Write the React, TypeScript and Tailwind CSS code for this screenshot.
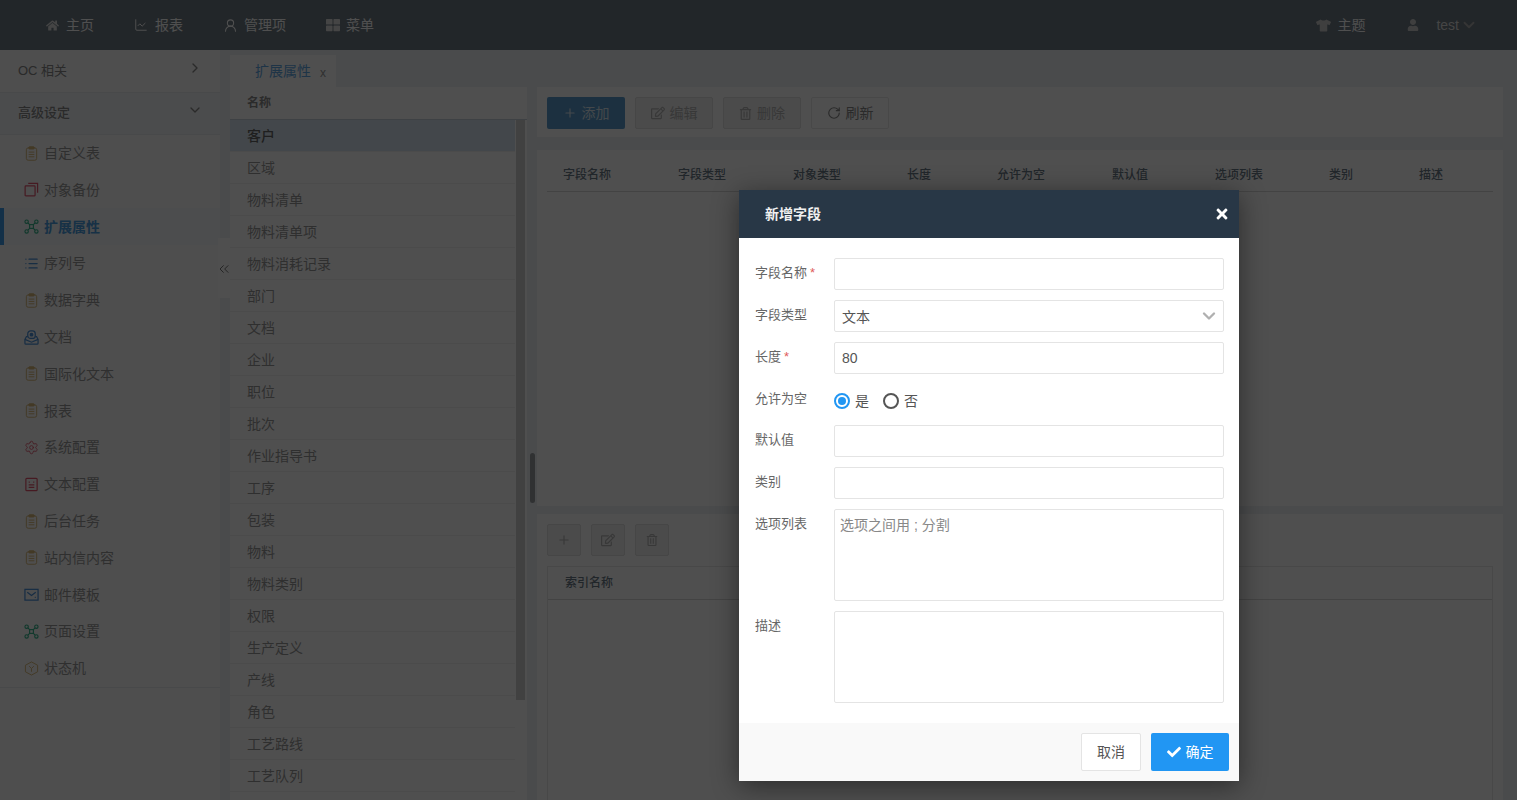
import { ChevronDown, ChevronRight, ChevronsLeft, List, Plus, RotateCw, Settings, UserRound, ChartLine } from "lucide-react";
import { FaCheck, FaHome, FaRegEdit, FaRegTrashAlt, FaThLarge, FaTimes, FaTshirt, FaUser } from "react-icons/fa";

type IconProps = { className?: string; strokeWidth?: number };

const NodesIcon = ({ className }: IconProps) => (
  <svg viewBox="0 0 16 16" fill="none" stroke="currentColor" strokeWidth="1.2" className={className}>
    <circle cx="2.8" cy="2.8" r="1.8" />
    <circle cx="13.2" cy="2.8" r="1.8" />
    <circle cx="2.8" cy="13.2" r="1.8" />
    <circle cx="13.2" cy="13.2" r="1.8" />
    <path d="M4.2 4.2 6 6M11.8 4.2 10 6M4.2 11.8 6 10M11.8 11.8 10 10" />
    <rect x="6" y="6" width="4" height="4" />
  </svg>
);

const ClipIcon = ({ className }: IconProps) => (
  <svg viewBox="0 0 16 16" fill="none" stroke="currentColor" strokeWidth="1" className={className}>
    <rect x="2.5" y="2" width="11" height="13.2" rx="2" />
    <rect x="5" y="0.8" width="6" height="2.4" rx="1" fill="currentColor" />
    <path d="M5 6.5h6M5 9h6M5 11.5h6" />
  </svg>
);

const BackupIcon = ({ className }: IconProps) => (
  <svg viewBox="0 0 16 16" fill="none" stroke="currentColor" strokeWidth="1.3" className={className}>
    <rect x="1.2" y="4.2" width="10.6" height="10.6" rx="0.8" />
    <path d="M4.5 1.5h10v10" />
  </svg>
);

const TrayIcon = ({ className }: IconProps) => (
  <svg viewBox="0 0 16 16" fill="none" stroke="currentColor" strokeWidth="1.3" className={className}>
    <path d="M4 7H2.6L1 10v4a1 1 0 0 0 1 1h12a1 1 0 0 0 1-1v-4l-1.6-3H12" />
    <path d="M1 10l7 3 7-3" />
    <rect x="4" y="1" width="8" height="8" rx="3" />
    <circle cx="8" cy="5" r="1.4" fill="currentColor" />
  </svg>
);

const NoteIcon = ({ className }: IconProps) => (
  <svg viewBox="0 0 16 16" fill="none" stroke="currentColor" strokeWidth="1.3" className={className}>
    <rect x="2" y="1.5" width="12" height="13" rx="1" />
    <path d="M5 5.5h1.2M9.8 5.5H11M5 8.5h6M5 11h6" />
  </svg>
);

const MailIcon = ({ className }: IconProps) => (
  <svg viewBox="0 0 16 16" fill="none" stroke="currentColor" strokeWidth="1.3" className={className}>
    <rect x="1" y="2.5" width="14" height="11.5" />
    <path d="m3.5 5.5 4.5 3.5 4.5-3.5M11.5 11h1" />
  </svg>
);

const HexIcon = ({ className }: IconProps) => (
  <svg viewBox="0 0 16 16" fill="none" stroke="currentColor" strokeWidth="1" className={className}>
    <path d="M8 1 14.5 4.5v7L8 15l-6.5-3.5v-7z" />
    <path d="M5.5 5.5 8 8l2.5-2.5M8 8v3.5" />
  </svg>
);

const amber = "text-[#d8b878]";

const menu = [
  { name: "自定义表", Icon: ClipIcon, color: amber },
  { name: "对象备份", Icon: BackupIcon, color: "text-[#e0566f]" },
  { name: "扩展属性", Icon: NodesIcon, color: "text-[#2fb389]", active: true },
  { name: "序列号", Icon: List, color: "text-[#4a90d9]", stroke: 2 },
  { name: "数据字典", Icon: ClipIcon, color: amber },
  { name: "文档", Icon: TrayIcon, color: "text-[#4a90d9]" },
  { name: "国际化文本", Icon: ClipIcon, color: amber },
  { name: "报表", Icon: ClipIcon, color: amber },
  { name: "系统配置", Icon: Settings, color: "text-[#e0566f]" },
  { name: "文本配置", Icon: NoteIcon, color: "text-[#e0566f]" },
  { name: "后台任务", Icon: ClipIcon, color: amber },
  { name: "站内信内容", Icon: ClipIcon, color: amber },
  { name: "邮件模板", Icon: MailIcon, color: "text-[#4a90d9]" },
  { name: "页面设置", Icon: NodesIcon, color: "text-[#2fb389]" },
  { name: "状态机", Icon: HexIcon, color: amber },
];

const entities = ["客户", "区域", "物料清单", "物料清单项", "物料消耗记录", "部门", "文档", "企业", "职位", "批次", "作业指导书", "工序", "包装", "物料", "物料类别", "权限", "生产定义", "产线", "角色", "工艺路线", "工艺队列"];

const columns = [
  { name: "字段名称", width: "w-[115px]" },
  { name: "字段类型", width: "w-[115px]" },
  { name: "对象类型", width: "w-[114px]" },
  { name: "长度", width: "w-[90px]" },
  { name: "允许为空", width: "w-[115px]" },
  { name: "默认值", width: "w-[103px]" },
  { name: "选项列表", width: "w-[114px]" },
  { name: "类别", width: "w-[90px]" },
  { name: "描述", width: "w-[60px]" },
];

const Label = ({ text, required }: { text: string; required?: boolean }) => (
  <label className="w-[79px] shrink-0 pt-[6px] text-[13px] leading-[18px] text-[#666]">
    {text}
    {required && <span className="ml-[3px] text-[#e05c5c]">*</span>}
  </label>
);

const inputClass = "h-8 w-[390px] rounded-[2px] border border-[#e4e4e4] bg-white px-[7px] text-sm text-[#555] outline-none";
const areaClass = "h-[92px] w-[390px] resize-none rounded-[2px] border border-[#e4e4e4] px-[5px] py-[6px] text-sm leading-[18px] text-[#555] outline-none placeholder:text-[#888]";

const GreyButton = ({ icon, text }: { icon: React.ReactNode; text: string }) => (
  <button className="flex h-8 w-[78px] items-center justify-center gap-[5px] rounded-[2px] border border-[#e0e0e0] bg-[#f0f0f0] text-sm text-[#b5b5b5]">
    {icon}
    {text}
  </button>
);

const SquareButton = ({ children }: { children: React.ReactNode }) => (
  <button className="flex h-8 w-[34px] items-center justify-center rounded-[2px] border border-[#e0e0e0] bg-[#f0f0f0] text-[#b5b5b5]">
    {children}
  </button>
);

export default function App() {
  return (
    <div className="relative flex h-screen flex-col overflow-hidden bg-[#edf2f6] font-['Liberation_Sans','Noto_Sans_CJK_SC',sans-serif]">
      {/* top nav */}
      <header className="flex h-[50px] shrink-0 items-center justify-between bg-[#6e7a84] text-sm text-white">
        <div className="flex items-center">
          <a className="ml-[46px] flex items-center gap-[7px]"><FaHome className="size-[13px] text-[#ddd]" />主页</a>
          <a className="ml-10 flex items-center gap-[7px]"><ChartLine className="size-[14px]" strokeWidth={1.7} />报表</a>
          <a className="ml-10 flex items-center gap-[6px]"><UserRound className="size-[15px]" strokeWidth={1.7} />管理项</a>
          <a className="ml-10 flex items-center gap-[6px]"><FaThLarge className="size-[14px] text-[#ddd]" />菜单</a>
        </div>
        <div className="flex items-center pr-[39px]">
          <a className="flex items-center gap-[6px]"><FaTshirt className="size-[15px] text-[#ccc]" />主题</a>
          <a className="ml-[42px] flex items-center"><FaUser className="size-3 text-[#ccc]" /><span className="ml-[17px] text-[#ddd]">test</span><ChevronDown className="ml-[1px] size-[18px] text-[#aaa]" strokeWidth={2.5} /></a>
        </div>
      </header>

      <div className="flex min-h-0 flex-1">
        {/* sidebar */}
        <aside className="relative w-[230px] shrink-0">
          <div className="h-full w-[220px] bg-[#fbfbfb]">
            <div className="border-b border-[#e8ebee]">
              <div className="flex h-[42.7px] items-center justify-between border-b border-[#e8ebee] pl-[18px] pr-[17px] text-[13px] text-[#888]">
                <span>OC 相关</span>
                <ChevronRight className="mb-[6px] size-4" />
              </div>
              <div className="flex h-[42px] items-center justify-between border-b border-[#e8ebee] bg-[#f2f5f8] pl-[18px] pr-[17px] text-[13px] font-medium text-[#888]">
                <span>高级设定</span>
                <ChevronDown className="mb-[6px] size-4" />
              </div>
              {menu.map((item) => (
                <div
                  key={item.name}
                  className={`flex h-[36.8px] items-center border-l-4 pl-5 text-sm ${item.active ? "border-[#3d9be9] bg-[#f4f7fa] font-bold text-[#4a9de0]" : "border-transparent text-[#999]"}`}
                >
                  <item.Icon className={`size-[15px] ${item.color}`} strokeWidth={item.stroke ?? 1.4} />
                  <span className="ml-[5px]">{item.name}</span>
                </div>
              ))}
            </div>
          </div>
          <div className="absolute left-[218px] top-[188px] flex h-[60px] w-3 items-end justify-center bg-white pb-[21px] text-[#777]">
            <ChevronsLeft className="size-4 shrink-0" strokeWidth={1.5} />
          </div>
        </aside>

        {/* entity list */}
        <div className="flex w-[297px] shrink-0 flex-col overflow-hidden">
          <div className="mt-[5px] flex h-8 w-[106px] shrink-0 items-center bg-white pl-[25px] text-sm text-[#62a8e5]">
            扩展属性<span className="ml-[9px] mt-[3px] text-xs text-[#999]">x</span>
          </div>
          <div className="relative flex-1 bg-white">
            <div className="flex h-[33px] items-center border-b border-[#c9d3dc] pl-[17px] text-xs font-bold text-[#8a8a8a]">名称</div>
            {entities.map((name, i) => (
              <div key={name} className={`flex h-8 w-[285px] items-center border-b border-[#f0f0f0] pl-[17px] text-sm ${i === 0 ? "bg-[#d8e6f2] font-medium text-[#666]" : "text-[#999]"}`}>
                {name}
              </div>
            ))}
            <div className="absolute right-[2px] top-[33px] h-[580px] w-[9px] bg-[#d2d2d2]" />
          </div>
        </div>

        {/* splitter */}
        <div className="relative w-[10px] shrink-0">
          <div className="absolute left-[3px] top-[403px] h-[50px] w-[5px] rounded-[3px] bg-[#9a9fa3]" />
        </div>

        {/* right side */}
        <div className="flex min-w-0 flex-1 flex-col pr-[14px] pt-[37px]">
          <div className="flex h-[50px] shrink-0 items-start gap-[10px] bg-white pl-[10px] pt-[10px]">
            <button className="flex h-8 w-[78px] items-center justify-center gap-[5px] rounded-[2px] bg-[#5a9ccf] text-sm text-[#dce8f2]"><Plus className="size-[14px]" />添加</button>
            <GreyButton icon={<FaRegEdit className="size-[14px]" />} text="编辑" />
            <GreyButton icon={<FaRegTrashAlt className="size-[13px]" />} text="删除" />
            <button className="flex h-8 w-[78px] items-center justify-center gap-[5px] rounded-[2px] border border-[#e8e8e8] bg-white text-sm text-[#888]"><RotateCw className="size-[14px]" />刷新</button>
          </div>
          <div className="mt-[13px] h-[356px] shrink-0 bg-white pl-[10px] pt-2">
            <div className="flex h-[34px] w-[946px] items-center border-b border-[#d8d8d8] pl-4 text-xs font-medium text-[#6b7a88]">
              {columns.map((col) => (
                <span key={col.name} className={col.width}>{col.name}</span>
              ))}
            </div>
          </div>
          <div className="mt-2 flex-1 bg-white pl-[10px] pt-[10px]">
            <div className="flex gap-[10px]">
              <SquareButton><Plus className="size-[14px]" /></SquareButton>
              <SquareButton><FaRegEdit className="size-[14px]" /></SquareButton>
              <SquareButton><FaRegTrashAlt className="size-3" /></SquareButton>
            </div>
            <div className="mt-[10px] h-[300px] w-[946px] border border-[#e8e8e8]">
              <div className="flex h-[33px] items-center border-b border-[#d8d8d8] pl-[17px] text-xs font-medium text-[#6b7a88]">索引名称</div>
            </div>
          </div>
        </div>
      </div>

      {/* modal backdrop */}
      <div className="absolute inset-0 bg-black/[0.69]" />

      {/* modal */}
      <div className="absolute left-[739px] top-[190px] flex h-[591px] w-[500px] flex-col bg-white shadow-[0_5px_25px_rgba(0,0,0,0.45)]">
        <div className="flex h-12 shrink-0 items-center justify-between bg-[#283746] pl-[26px] pr-[9px] text-sm font-bold text-[#f0f0f0]">
          <span>新增字段</span>
          <FaTimes className="size-4 text-white" />
        </div>
        <div className="flex flex-1 flex-col pl-4 pr-[15px] pt-5">
          <div className="flex items-start"><Label text="字段名称" required /><input className={inputClass} /></div>
          <div className="mt-[10px] flex items-start">
            <Label text="字段类型" />
            <div className={`${inputClass} flex items-center justify-between pr-[4px]`}>
              <span className="pt-[1px]">文本</span>
              <ChevronDown className="size-5 text-[#b0b0b0]" strokeWidth={2.8} />
            </div>
          </div>
          <div className="mt-[10px] flex items-start"><Label text="长度" required /><input className={inputClass} defaultValue="80" /></div>
          <div className="mt-[10px] flex h-[31px] items-start">
            <Label text="允许为空" />
            <div className="mt-[7px] flex items-center text-sm text-[#555]">
              <span className="flex size-4 items-center justify-center rounded-full border-2 border-[#2196f3]"><span className="size-2 rounded-full bg-[#2196f3]" /></span>
              <span className="ml-[5px]">是</span>
              <span className="ml-[14px] size-4 rounded-full border-2 border-[#555]" />
              <span className="ml-[5px]">否</span>
            </div>
          </div>
          <div className="mt-[10px] flex items-start"><Label text="默认值" /><input className={inputClass} /></div>
          <div className="mt-[10px] flex items-start"><Label text="类别" /><input className={inputClass} /></div>
          <div className="mt-[10px] flex items-start">
            <Label text="选项列表" />
            <textarea className={areaClass} placeholder="选项之间用 ; 分割" />
          </div>
          <div className="mt-[10px] flex items-start">
            <Label text="描述" />
            <textarea className={areaClass} />
          </div>
        </div>
        <div className="flex h-[58px] shrink-0 items-center justify-end gap-[10px] bg-[#f9f9f9] pr-[10px]">
          <button className="h-[38px] w-[60px] rounded-[2px] border border-[#e4e4e4] bg-white text-sm text-[#555]">取消</button>
          <button className="flex h-[38px] w-[78px] items-center justify-center gap-[5px] rounded-[2px] bg-[#2196f3] text-sm text-white"><FaCheck className="size-[14px]" />确定</button>
        </div>
      </div>
    </div>
  );
}
